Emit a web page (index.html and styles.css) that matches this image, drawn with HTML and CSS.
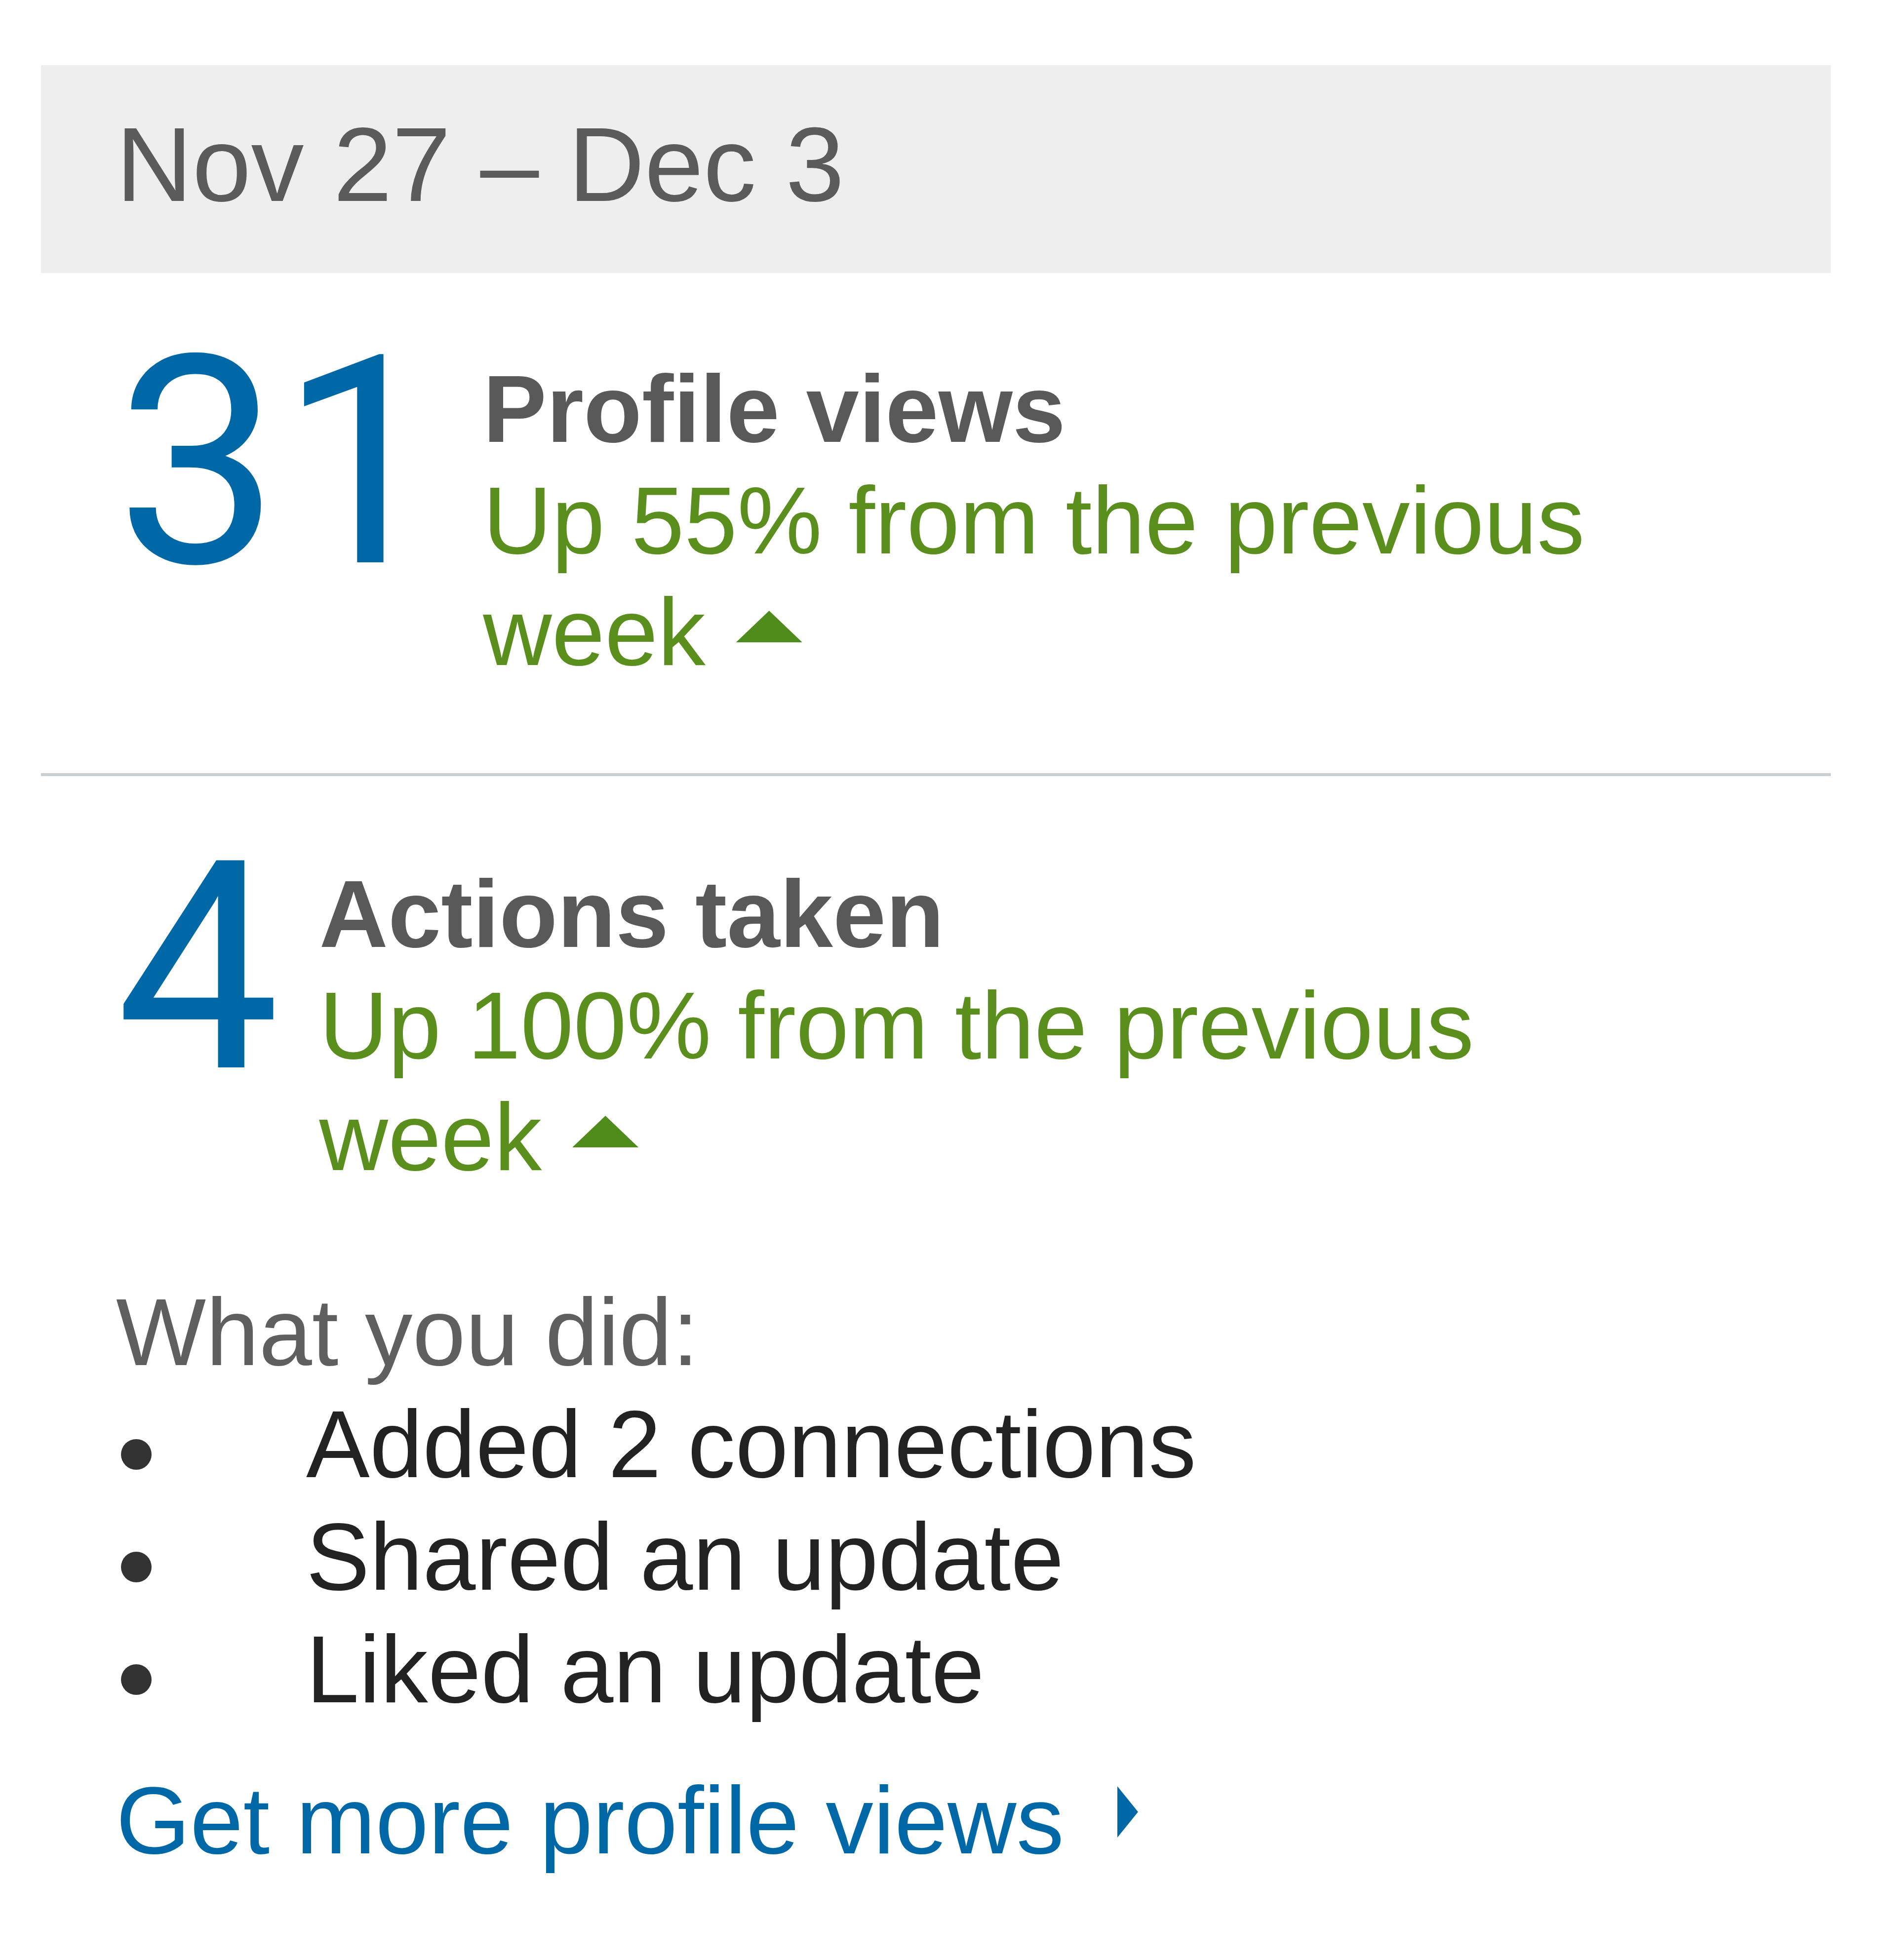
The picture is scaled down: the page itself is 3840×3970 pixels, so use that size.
FILE: index.html
```html
<!DOCTYPE html>
<html lang="en">
<head>
  <meta charset="UTF-8">
  <title>Your week on LinkedIn</title>
  <link rel="stylesheet" href="styles.css">
</head>
<body>
  <div class="card">
    <!-- Week range -->
    <div class="range">Nov 27 – Dec 3</div>

    <!-- Profile views -->
    <div class="stat">
      <div class="stat-num">31</div>
      <div class="stat-text">
        <div class="stat-title">Profile views</div>
        <div class="stat-change">Up 55% from the previous week<span class="up"></span></div>
      </div>
    </div>

    <div class="divider"></div>

    <!-- Actions taken -->
    <div class="stat">
      <div class="stat-num">4</div>
      <div class="stat-text">
        <div class="stat-title">Actions taken</div>
        <div class="stat-change">Up 100% from the previous week<span class="up"></span></div>
      </div>
    </div>

    <div class="did">
      <div class="did-label">What you did:</div>
      <ul class="did-list">
        <li>Added 2 connections</li>
        <li>Shared an update</li>
        <li>Liked an update</li>
      </ul>
      <a class="more" href="#">Get more profile views<span class="go"></span></a>
    </div>
  </div>
</body>
</html>
```

FILE: styles.css
```css
body {
  margin: 0;
  background: #fff;
  font-family: "Liberation Sans", Arial, Helvetica, sans-serif;
}

.card {
  width: 3625px;
  margin: 132px 0 0 83px;
  font-size: 193px;
  line-height: 226px;
}

.range {
  background: #eeeeee;
  color: #5b5b5b;
  font-size: 214px;
  line-height: 250px;
  padding: 76px 0 95px 152px;
}

.stat {
  display: flex;
  align-items: flex-start;
  padding: 0 340px 0 152px;
  margin-top: 87px;
}

/* Roboto: its "1" has no foot, like the original Helvetica digits */
.stat-num {
  font-family: Roboto, "Liberation Sans", sans-serif;
  font-size: 590px;
  line-height: 1;
  color: #0068a7;
  margin: 3px 80px 0 0;
}

.stat-text {
  flex: 1;
  padding-top: 75px;
}

.stat-title {
  font-weight: bold;
  color: #595959;
}

.stat-change {
  color: #5a8f1e;
}

.up {
  display: inline-block;
  width: 134px;
  height: 64px;
  margin: 0 0 46px 62px;
  background: #4f8c1c;
  clip-path: polygon(50% 0, 100% 100%, 0 100%);
}

.divider {
  height: 6px;
  background: #c9ced4;
  margin-top: 173px;
}

.divider + .stat {
  margin-top: 91px;
}

.did {
  padding: 0 0 0 152px;
  margin-top: 169px;
}

.did-label {
  color: #5f5f5f;
}

.did-list {
  list-style: none;
  margin: 0;
  padding: 0;
  line-height: 228px;
  color: #222;
}

.did-list li {
  display: flex;
}

.did-list li::before {
  content: "";
  flex: none;
  width: 62px;
  height: 62px;
  border-radius: 50%;
  background: #333;
  margin: 104px 313px 0 10px;
}

.more {
  display: inline-block;
  margin-top: 79px;
  color: #0068a7;
  text-decoration: none;
}

.go {
  display: inline-block;
  width: 42px;
  height: 104px;
  margin: 0 0 32px 108px;
  background: #0068a7;
  clip-path: polygon(0 0, 100% 50%, 0 100%);
}
```
